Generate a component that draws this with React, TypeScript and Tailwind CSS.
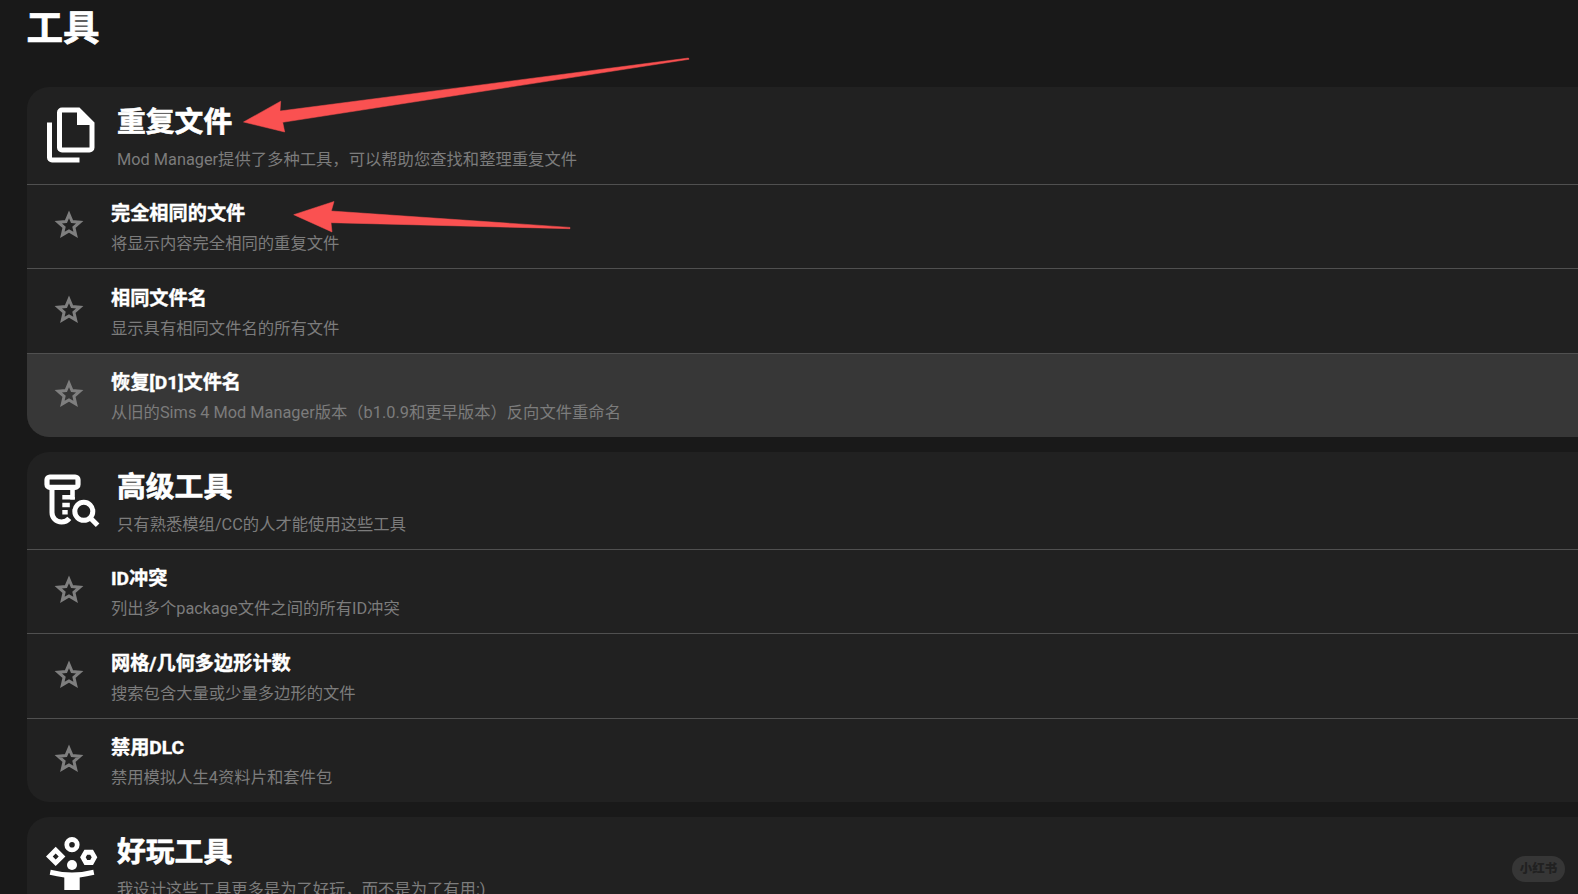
import type { ReactNode } from "react";

interface Tool {
  name: string;
  description: string;
  active?: boolean;
}

interface ToolGroup {
  title: string;
  description: string;
  icon: ReactNode;
  tools: Tool[];
}

function StarIcon() {
  return (
    <svg viewBox="0 0 24 24" className="size-[34px] shrink-0 text-[#7f7f7f]" fill="none">
      <path
        d="M12 4.5L14.15 9.56L19.62 10.03L15.47 13.63L16.71 18.98L12 16.14L7.29 18.98L8.53 13.63L4.38 10.03L9.85 9.56z"
        stroke="currentColor"
        strokeWidth="2.1"
        strokeMiterlimit="10"
      />
    </svg>
  );
}

function FilesIcon() {
  return (
    <svg viewBox="0 -960 960 960" className="size-[60px] shrink-0" fill="currentColor">
      <path d="M760-200H320q-33 0-56.5-23.5T240-280v-560q0-33 23.5-56.5T320-920h280l240 240v400q0 33-23.5 56.5T760-200ZM560-640v-200H320v560h440v-360H560ZM160-40q-33 0-56.5-23.5T80-120v-560h80v560h440v80H160Z" />
    </svg>
  );
}

function TubeSearchIcon() {
  return (
    <svg viewBox="0 0 60 60" className="size-[60px] shrink-0" fill="none" stroke="currentColor">
      <rect x="5" y="7" width="31" height="10.3" rx="2.8" strokeWidth="5.2" />
      <path d="M10 18v24.5c0 5.5 4 9.5 9.5 9.5 3.300 0 6-1.3 7.800-3.6" strokeWidth="5" />
      <path d="M30.5 18v9.200H20.3" strokeWidth="4.6" />
      <path d="M30.5 27v2.5" strokeWidth="4.6" />
      <path d="M20.3 35h7.500M20.3 42.3h5.400" strokeWidth="4.4" />
      <circle cx="41.8" cy="41.3" r="9" strokeWidth="5" />
      <path d="M47.6 47.3l8 8" strokeWidth="5" />
    </svg>
  );
}

function JugglerIcon() {
  return (
    <svg viewBox="0 0 60 60" className="size-[60px] shrink-0" fill="currentColor" fillRule="evenodd">
      <circle cx="30" cy="9.7" r="5.2" fill="none" stroke="currentColor" strokeWidth="4.8" />
      <path d="M13.7 11.7l9.7 9.7-9.7 9.7L4 21.4zM13.7 18.4l-3 3 3 3 3-3z" />
      <path d="M42.4 14.7h8.6l4.3 7.6-4.3 7.6h-8.6l-4.3-7.6zM45.2 19.7l-1.5 2.6 1.5 2.6h3l1.5-2.6-1.5-2.6z" />
      <circle cx="30" cy="30" r="5" />
      <path d="M8.7 34.7Q30 40.3 51.3 34.7L52.3 39.7Q45 41.6 37.7 42.4V55H22.3V42.4Q15 41.6 7.7 39.7z" />
    </svg>
  );
}

const groups: ToolGroup[] = [
  {
    title: "重复文件",
    description: "Mod Manager提供了多种工具，可以帮助您查找和整理重复文件",
    icon: <FilesIcon />,
    tools: [
      { name: "完全相同的文件", description: "将显示内容完全相同的重复文件" },
      { name: "相同文件名", description: "显示具有相同文件名的所有文件" },
      {
        name: "恢复[D1]文件名",
        description: "从旧的Sims 4 Mod Manager版本（b1.0.9和更早版本）反向文件重命名",
        active: true,
      },
    ],
  },
  {
    title: "高级工具",
    description: "只有熟悉模组/CC的人才能使用这些工具",
    icon: <TubeSearchIcon />,
    tools: [
      { name: "ID冲突", description: "列出多个package文件之间的所有ID冲突" },
      { name: "网格/几何多边形计数", description: "搜索包含大量或少量多边形的文件" },
      { name: "禁用DLC", description: "禁用模拟人生4资料片和套件包" },
    ],
  },
  {
    title: "好玩工具",
    description: "我设计这些工具更多是为了好玩，而不是为了有用:)",
    icon: <JugglerIcon />,
    tools: [],
  },
];

function ToolRow({ tool }: { tool: Tool }) {
  return (
    <div
      className={`flex h-[84.333px] items-start border-t border-[#505050] pt-[23.3px] pl-[25.1px] ${
        tool.active ? "bg-[#373737]" : ""
      }`}
    >
      <StarIcon />
      <div className="-mt-[7px] ml-[24.9px] flex flex-col gap-1 whitespace-nowrap">
        <div className="text-[19.2px] leading-[26px] font-bold text-white [-webkit-text-stroke:0.4px_white]">
          {tool.name}
        </div>
        <div className="text-[16.32px] leading-[26px] text-[#7c7c7c]">{tool.description}</div>
      </div>
    </div>
  );
}

function ToolCard({ group }: { group: ToolGroup }) {
  return (
    <section className="shrink-0 overflow-hidden rounded-l-[22px] bg-[#212121]">
      <div className="flex h-[97px] items-start pt-[18px] pl-[15px] text-white">
        {group.icon}
        <div className="ml-[15px] flex flex-col gap-2 whitespace-nowrap">
          <h2 className="-mt-px text-[28.8px] leading-9 font-bold [-webkit-text-stroke:0.6px_white]">
            {group.title}
          </h2>
          <p className="text-[16.32px] leading-6 text-[#7c7c7c]">{group.description}</p>
        </div>
      </div>
      {group.tools.map((tool) => (
        <ToolRow key={tool.name} tool={tool} />
      ))}
    </section>
  );
}

export default function App() {
  return (
    <div className="relative h-[894px] w-[1578px] overflow-hidden bg-[#191919] font-[Roboto,'Noto_Sans_CJK_SC',sans-serif]">
      <div className="flex flex-col pl-[27px]">
        <h1 className="-ml-[0.5px] h-[87px] pt-1 text-[36.5px] leading-[50px] font-bold text-white [-webkit-text-stroke:0.7px_white]">
          工具
        </h1>
        <div className="flex flex-col gap-[15px]">
          {groups.map((group) => (
            <ToolCard key={group.title} group={group} />
          ))}
        </div>
      </div>

      {/* Annotation arrows */}
      <svg
        viewBox="0 0 1578 894"
        className="pointer-events-none absolute inset-0 size-full"
        fill="#fa5151"
        stroke="#fa5151"
        strokeWidth="0.5"
        strokeLinejoin="round"
      >
        <path d="M243.5 122L280.7 101.2L280 111L688.5 58L689 59.3L282.7 122.3L284.7 132z" />
        <path d="M293.7 214.7L334 201.5L331.3 211L570 227.4V228.7L331 222.7L332 232z" />
      </svg>

      {/* Watermark */}
      <div className="absolute right-[13px] bottom-3 flex h-[26px] w-[53px] items-center justify-center rounded-full bg-[#363636] text-[12.5px] font-black text-[#212121]">
        小红书
      </div>
    </div>
  );
}
